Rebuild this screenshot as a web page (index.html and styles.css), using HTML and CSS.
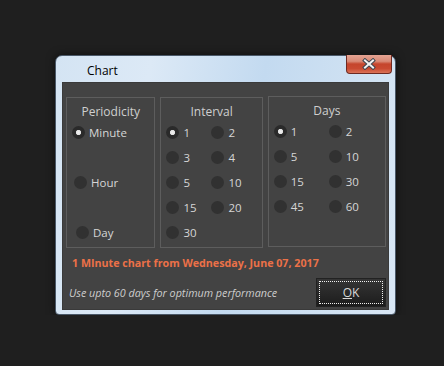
FILE: index.html
```html
<!DOCTYPE html>
<html>
<head>
    <title>Chart</title>
    <link rel="stylesheet" href="styles.css">
</head>
<body>
    <div class="window">
        <div class="titlebar">
            <span class="title">Chart</span>
            <button class="close-btn" aria-label="Close">
                <svg width="16" height="12" viewBox="0 0 16 12">
                    <path d="M4 2.5 L12 9.5 M12 2.5 L4 9.5" stroke="#40464f" stroke-width="4" stroke-linecap="square"/>
                    <path d="M4 2.5 L12 9.5 M12 2.5 L4 9.5" stroke="#f4f4f4" stroke-width="2" stroke-linecap="square"/>
                </svg>
            </button>
        </div>
        <div class="client">
            <div class="groups">
                <div class="group group-period">
                    <div class="group-title">Periodicity</div>
                    <div class="period-list">
                        <label class="radio"><span class="dot checked"></span>Minute</label>
                        <label class="radio shift-1"><span class="dot"></span>Hour</label>
                        <label class="radio shift-2"><span class="dot"></span>Day</label>
                    </div>
                </div>
                <div class="group group-interval">
                    <div class="group-title">Interval</div>
                    <div class="radio-grid interval-grid">
                        <label class="radio"><span class="dot checked"></span>1</label>
                        <label class="radio"><span class="dot"></span>2</label>
                        <label class="radio"><span class="dot"></span>3</label>
                        <label class="radio"><span class="dot"></span>4</label>
                        <label class="radio"><span class="dot"></span>5</label>
                        <label class="radio"><span class="dot"></span>10</label>
                        <label class="radio"><span class="dot"></span>15</label>
                        <label class="radio"><span class="dot"></span>20</label>
                        <label class="radio"><span class="dot"></span>30</label>
                    </div>
                </div>
                <div class="group group-days">
                    <div class="group-title">Days</div>
                    <div class="radio-grid days-grid">
                        <label class="radio"><span class="dot checked"></span>1</label>
                        <label class="radio"><span class="dot"></span>2</label>
                        <label class="radio"><span class="dot"></span>5</label>
                        <label class="radio"><span class="dot"></span>10</label>
                        <label class="radio"><span class="dot"></span>15</label>
                        <label class="radio"><span class="dot"></span>30</label>
                        <label class="radio"><span class="dot"></span>45</label>
                        <label class="radio"><span class="dot"></span>60</label>
                    </div>
                </div>
            </div>
            <div class="summary">1 MInute chart from Wednesday, June 07, 2017</div>
            <div class="footer">
                <span class="hint">Use upto 60 days for optimum performance</span>
                <button class="ok-btn"><span class="focus"><u>O</u>K</span></button>
            </div>
        </div>
    </div>
</body>
</html>
```

FILE: styles.css
```css
body {
    margin: 0;
    background-color: #1f1f1f;
    font-family: "Open Sans", "Noto Sans", sans-serif;
    font-size: 11.5px;
    padding: 55px 0 0 55px;
}
.window {
    width: 341px;
    height: 260px;
    box-sizing: border-box;
    padding: 0 6px 5px 6px;
    border: 1px solid #4a5868;
    border-radius: 7px 7px 4px 4px;
    background: linear-gradient(100deg, #d4e4f3 0%, #dce9f6 25%, #c3daf0 55%, #cfe1f2 80%, #d9e7f5 100%);
    box-shadow: 0 0 8px rgba(0, 0, 0, 0.6);
}
.titlebar {
    height: 26px;
    display: flex;
    align-items: flex-start;
    justify-content: space-between;
}
.title {
    margin: 6px 0 0 25px;
    color: #000;
    font-size: 12px;
}
.close-btn {
    width: 46px;
    height: 19px;
    margin-top: -1px;
    margin-right: -3px;
    border: 1px solid #6d2a22;
    border-top: none;
    border-radius: 0 0 4px 4px;
    background: linear-gradient(#e4a392 0%, #d98a76 35%, #c5452c 50%, #c94a31 75%, #db7358 100%);
    display: flex;
    align-items: center;
    justify-content: center;
    padding: 0;
}
.client {
    height: 228px;
    background-color: #434343;
    border: 1px solid #3a3a3a;
    box-sizing: border-box;
    padding: 14px 2px 0 3px;
    color: #d2d2d2;
}
.groups {
    display: flex;
    gap: 5px;
    align-items: flex-start;
}
.group {
    height: 151px;
    box-sizing: border-box;
    border: 1px solid #5d5d5d;
    padding: 6px 0 0 5px;
}
.group-period {
    width: 90px;
}
.group-interval {
    width: 103px;
}
.group-days {
    width: 119px;
    margin-top: -1px;
}
.group-title {
    height: 16px;
    line-height: 16px;
    text-align: center;
    padding-right: 5px;
    color: #cfcfcf;
    font-size: 12px;
}
.period-list {
    display: flex;
    flex-direction: column;
    gap: 25px;
}
.radio-grid {
    display: grid;
}
.interval-grid {
    grid-template-columns: 45px 45px;
}
.days-grid {
    grid-template-columns: 55px 55px;
}
.radio {
    height: 25px;
    display: flex;
    align-items: center;
    gap: 4px;
    color: #d6d6d6;
}
.shift-1 {
    padding-left: 2px;
}
.shift-2 {
    padding-left: 4px;
}
.dot {
    width: 13px;
    height: 13px;
    border-radius: 50%;
    background-color: #313131;
    flex-shrink: 0;
}
.dot.checked {
    background: radial-gradient(circle, #f0f0f0 0, #e2e2e2 2.2px, #2a2a2a 3px, #2a2a2a 100%);
}
.summary {
    margin: 7px 0 0 6px;
    height: 16px;
    line-height: 16px;
    color: #ec7148;
    font-weight: bold;
    font-size: 10.7px;
}
.footer {
    margin-top: 7px;
    display: flex;
    align-items: center;
    justify-content: space-between;
    padding-left: 3px;
}
.hint {
    font-style: italic;
    color: #cdcdcd;
    font-size: 10.75px;
}
.ok-btn {
    width: 70px;
    height: 29px;
    padding: 2px;
    border: 1px solid #222;
    background: linear-gradient(#353535, #1c1c1c);
    box-sizing: border-box;
    font-family: inherit;
    font-size: 12px;
    color: #d8d8d8;
}
.focus {
    display: flex;
    align-items: center;
    justify-content: center;
    height: 100%;
    border: 1px dotted #f0f0f0;
    box-sizing: border-box;
}
```
